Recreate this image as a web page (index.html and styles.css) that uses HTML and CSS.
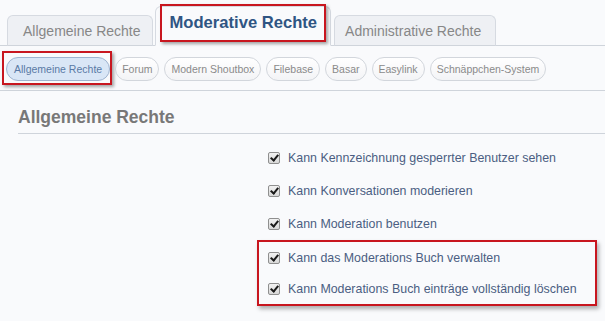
FILE: index.html
```html
<!DOCTYPE html>
<html lang="de">
<head>
  <meta charset="utf-8" />
  <title>Moderative Rechte</title>
  <link rel="stylesheet" href="styles.css">
</head>
<body>
<div class="perm-page">
  <div class="perm-tabs">
    <span class="perm-tab">Allgemeine Rechte</span>
    <span class="perm-tab perm-tab--active">Moderative Rechte<span class="perm-mark perm-mark--tab"></span></span>
    <span class="perm-tab">Administrative Rechte</span>
  </div>
  <div class="perm-pills">
    <span class="perm-pill perm-pill--active">Allgemeine Rechte<span class="perm-mark perm-mark--pill"></span></span>
    <span class="perm-pill">Forum</span>
    <span class="perm-pill">Modern Shoutbox</span>
    <span class="perm-pill">Filebase</span>
    <span class="perm-pill">Basar</span>
    <span class="perm-pill">Easylink</span>
    <span class="perm-pill">Schnäppchen-System</span>
  </div>
  <h2 class="perm-heading">Allgemeine Rechte</h2>
  <div class="perm-list">
    <label class="perm-row"><span class="perm-box"></span>Kann Kennzeichnung gesperrter Benutzer sehen</label>
    <label class="perm-row"><span class="perm-box"></span>Kann Konversationen moderieren</label>
    <label class="perm-row"><span class="perm-box"></span>Kann Moderation benutzen</label>
    <div class="perm-group">
      <label class="perm-row"><span class="perm-box"></span>Kann das Moderations Buch verwalten</label>
      <label class="perm-row"><span class="perm-box"></span>Kann Moderations Buch einträge vollständig löschen</label>
    </div>
  </div>
</div>
</body>
</html>
```

FILE: styles.css
```css
:root {
  --seite: #f9fafc;
  --linie: #cfd4db;
  --rot: #c8161f;
  --text: #4b5e82;
}
html, body {
  margin: 0;
  padding: 0;
  height: 100%;
}
body {
  background-color: var(--seite);
  font-family: "Liberation Sans", Arial, sans-serif;
}
.perm-page {
  width: 605px;
  height: 321px;
  overflow: hidden;
}
.perm-tabs {
  display: flex;
  align-items: flex-end;
  gap: 2px;
  height: 46px;
  padding-left: 7px;
  border-bottom: 1px solid var(--linie);
  box-sizing: border-box;
}
.perm-tab {
  position: relative;
  display: flex;
  align-items: center;
  height: 31px;
  padding: 0 11px 0 15px;
  margin-bottom: -1px;
  background-color: #eef0f4;
  border: 1px solid #d6dae1;
  border-bottom-color: var(--linie);
  border-radius: 6px 6px 0 0;
  font-size: 14px;
  color: #878787;
  box-sizing: border-box;
}
.perm-tab--active {
  height: 40px;
  padding: 0 13px 7px 14px;
  background-color: var(--seite);
  border-bottom-color: var(--seite);
  font-size: 16.6px;
  font-weight: bold;
  color: #2f5583;
}
.perm-tab--active + .perm-tab {
  margin-left: 1px;
  padding: 0 14px 0 10px;
}
.perm-mark {
  position: absolute;
  border: 2px solid var(--rot);
  box-shadow: 2px 2px 3px rgba(0, 0, 0, 0.35);
  pointer-events: none;
}
.perm-mark--tab {
  left: 4px;
  right: 4px;
  top: -3px;
  bottom: 3px;
}
.perm-mark--pill {
  left: -5px;
  right: -3px;
  top: -7px;
  bottom: -5px;
}
.perm-pills {
  display: flex;
  align-items: center;
  gap: 5px;
  height: 45px;
  padding: 1px 0 0 6px;
  border-bottom: 1px solid var(--linie);
  box-sizing: border-box;
}
.perm-pill {
  position: relative;
  height: 24px;
  line-height: 22px;
  padding: 0 6px;
  border: 1px solid #d2d6dc;
  border-radius: 12px;
  background: linear-gradient(#ffffff, #f3f4f6);
  font-size: 10.5px;
  color: #8a8a8a;
  box-sizing: border-box;
  white-space: nowrap;
}
.perm-pill--active {
  padding: 0 7px;
  background: #d9e6f6;
  border-color: #9fb4d0;
  color: #5a7aa5;
}
.perm-heading {
  margin: 16px 0 0 18px;
  padding-bottom: 6px;
  border-bottom: 1px solid var(--linie);
  font-size: 17.5px;
  line-height: 20px;
  color: #787878;
}
.perm-list {
  margin: 7px 0 0 257px;
  width: 340px;
}
.perm-row {
  display: flex;
  align-items: center;
  gap: 8px;
  height: 33px;
  padding-left: 11px;
  font-size: 12.4px;
  color: var(--text);
  white-space: nowrap;
}
.perm-group {
  border: 2px solid var(--rot);
  box-shadow: 2px 3px 4px rgba(0, 0, 0, 0.3);
  box-sizing: border-box;
}
.perm-group .perm-row {
  height: 31px;
  padding-left: 9px;
}
.perm-box {
  position: relative;
  width: 12px;
  height: 12px;
  border: 1px solid #8f8f8f;
  border-radius: 2px;
  background: linear-gradient(#f2f2f2, #d8d8d8);
  box-sizing: border-box;
}
.perm-box::after {
  content: "";
  position: absolute;
  left: 3px;
  top: 0px;
  width: 3px;
  height: 6px;
  border: solid #1a1a1a;
  border-width: 0 2px 2px 0;
  transform: rotate(40deg);
}
```
